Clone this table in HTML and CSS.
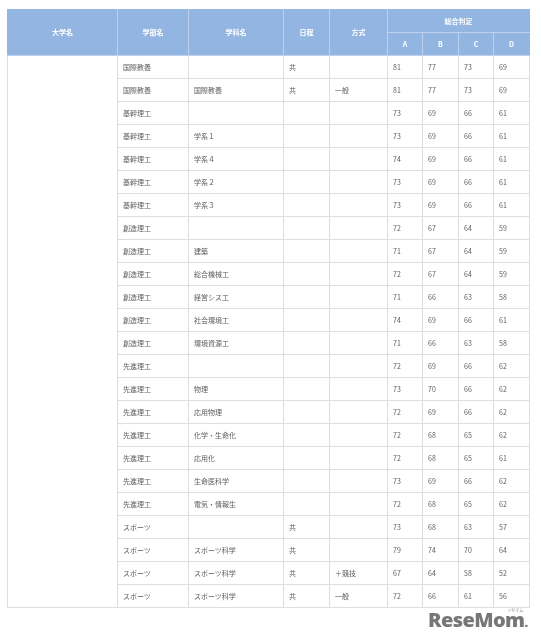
FILE: index.html
```html
<!DOCTYPE html>
<html lang="ja">
<head>
<meta charset="utf-8">
<link rel="stylesheet" href="styles.css">
</head>
<body>
<div class="wrap">
<table class="grid">
<colgroup>
<col class="c-univ"><col class="c-fac"><col class="c-dept"><col class="c-sch"><col class="c-meth">
<col class="c-n"><col class="c-n2"><col class="c-n"><col class="c-n2">
</colgroup>
<thead>
<tr><th rowspan="2">大学名</th><th rowspan="2">学部名</th><th rowspan="2">学科名</th><th rowspan="2">日程</th><th rowspan="2">方式</th><th colspan="4">総合判定</th></tr>
<tr><th>A</th><th>B</th><th>C</th><th>D</th></tr>
</thead>
<tbody>
<tr><td rowspan="24"></td><td>国際教養</td><td></td><td>共</td><td></td><td>81</td><td>77</td><td>73</td><td>69</td></tr>
<tr><td>国際教養</td><td>国際教養</td><td>共</td><td>一般</td><td>81</td><td>77</td><td>73</td><td>69</td></tr>
<tr><td>基幹理工</td><td></td><td></td><td></td><td>73</td><td>69</td><td>66</td><td>61</td></tr>
<tr><td>基幹理工</td><td>学系１</td><td></td><td></td><td>73</td><td>69</td><td>66</td><td>61</td></tr>
<tr><td>基幹理工</td><td>学系４</td><td></td><td></td><td>74</td><td>69</td><td>66</td><td>61</td></tr>
<tr><td>基幹理工</td><td>学系２</td><td></td><td></td><td>73</td><td>69</td><td>66</td><td>61</td></tr>
<tr><td>基幹理工</td><td>学系３</td><td></td><td></td><td>73</td><td>69</td><td>66</td><td>61</td></tr>
<tr><td>創造理工</td><td></td><td></td><td></td><td>72</td><td>67</td><td>64</td><td>59</td></tr>
<tr><td>創造理工</td><td>建築</td><td></td><td></td><td>71</td><td>67</td><td>64</td><td>59</td></tr>
<tr><td>創造理工</td><td>総合機械工</td><td></td><td></td><td>72</td><td>67</td><td>64</td><td>59</td></tr>
<tr><td>創造理工</td><td>経営シス工</td><td></td><td></td><td>71</td><td>66</td><td>63</td><td>58</td></tr>
<tr><td>創造理工</td><td>社会環境工</td><td></td><td></td><td>74</td><td>69</td><td>66</td><td>61</td></tr>
<tr><td>創造理工</td><td>環境資源工</td><td></td><td></td><td>71</td><td>66</td><td>63</td><td>58</td></tr>
<tr><td>先進理工</td><td></td><td></td><td></td><td>72</td><td>69</td><td>66</td><td>62</td></tr>
<tr><td>先進理工</td><td>物理</td><td></td><td></td><td>73</td><td>70</td><td>66</td><td>62</td></tr>
<tr><td>先進理工</td><td>応用物理</td><td></td><td></td><td>72</td><td>69</td><td>66</td><td>62</td></tr>
<tr><td>先進理工</td><td>化学・生命化</td><td></td><td></td><td>72</td><td>68</td><td>65</td><td>62</td></tr>
<tr><td>先進理工</td><td>応用化</td><td></td><td></td><td>72</td><td>68</td><td>65</td><td>61</td></tr>
<tr><td>先進理工</td><td>生命医科学</td><td></td><td></td><td>73</td><td>69</td><td>66</td><td>62</td></tr>
<tr><td>先進理工</td><td>電気・情報生</td><td></td><td></td><td>72</td><td>68</td><td>65</td><td>62</td></tr>
<tr><td>スポーツ</td><td></td><td>共</td><td></td><td>73</td><td>68</td><td>63</td><td>57</td></tr>
<tr><td>スポーツ</td><td>スポーツ科学</td><td>共</td><td></td><td>79</td><td>74</td><td>70</td><td>64</td></tr>
<tr><td>スポーツ</td><td>スポーツ科学</td><td>共</td><td>＋競技</td><td>67</td><td>64</td><td>58</td><td>52</td></tr>
<tr><td>スポーツ</td><td>スポーツ科学</td><td>共</td><td>一般</td><td>72</td><td>66</td><td>61</td><td>56</td></tr>
</tbody>
</table>
<div class="logo-row">
<div class="logo"><span class="logo-kana">リセマム</span><span class="logo-text">ReseMom<span class="dot">.</span></span></div>
</div>
</div>
</body>
</html>
```
FILE: styles.css
```css
html, body {
  margin: 0;
  padding: 0;
  background: #fff;
}
.wrap {
  padding: 9px 0 0 7px;
  width: 522px;
}
.grid {
  border-collapse: collapse;
  table-layout: fixed;
  width: 522px;
  font-family: "Noto Sans CJK JP", "Liberation Sans", sans-serif;
  font-size: 7px;
  color: #5c5c5c;
  will-change: transform;
}
.c-univ { width: 110px; }
.c-fac { width: 71px; }
.c-dept { width: 95px; }
.c-sch { width: 46px; }
.c-meth { width: 58px; }
.c-n { width: 35px; }
.c-n2 { width: 36px; }
.grid th {
  background: #93b5e1;
  color: #fff;
  font-weight: bold;
  text-align: center;
  height: 22px;
  padding: 0;
  border: 1px solid #bcd1ee;
  line-height: 1;
}
.grid thead tr:first-child th {
  border-top-color: #93b5e1;
}
.grid thead tr:first-child th:first-child {
  border-left-color: #93b5e1;
}
.grid thead tr th:last-child {
  border-right-color: #93b5e1;
}
.grid td {
  height: 22px;
  padding: 0 0 0 5px;
  border: 1px solid #dedede;
  line-height: 1;
  vertical-align: middle;
  white-space: nowrap;
  overflow: hidden;
}
.logo-row {
  display: flex;
  justify-content: flex-end;
  padding-right: 1px;
}
.logo {
  display: flex;
  flex-direction: column;
  align-items: flex-end;
  will-change: transform;
}
.logo-kana {
  font-family: "Noto Sans CJK JP", sans-serif;
  font-size: 4px;
  color: #888;
  line-height: 4px;
  margin-right: 5px;
}
.logo-text {
  font-family: "Open Sans", "Liberation Sans", sans-serif;
  font-weight: 800;
  font-size: 20px;
  letter-spacing: -0.6px;
  color: #777;
  line-height: 16px;
}
.dot {
  font-size: 13px;
  letter-spacing: 0;
}
```
